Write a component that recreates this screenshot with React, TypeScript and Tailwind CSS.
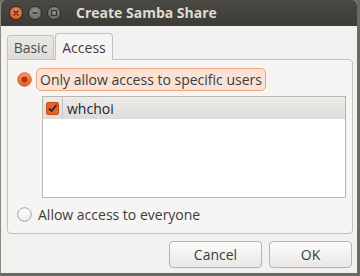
import React from 'react';

const font = { fontFamily: '"Open Sans", "Noto Sans", "DejaVu Sans", sans-serif' };

const TitleButton: React.FC<{ kind: 'close' | 'min' | 'max' }> = ({ kind }) => (
  <div
    className={
      kind === 'close'
        ? 'w-[14px] h-[14px] rounded-full flex items-center justify-center bg-[radial-gradient(circle_at_50%_35%,#f58a60,#dc4f1a)] border border-[#3a2a20]'
        : 'w-[14px] h-[14px] rounded-full flex items-center justify-center bg-[radial-gradient(circle_at_50%_35%,#94928c,#62615c)] border border-[#2e2d2a]'
    }
  >
    <svg width="8" height="8" viewBox="0 0 8 8">
      {kind === 'close' && (
        <path d="M2 2 L6 6 M6 2 L2 6" stroke="#3b1f12" strokeWidth="1.3" strokeLinecap="round" />
      )}
      {kind === 'min' && <path d="M1.5 4 H6.5" stroke="#35342f" strokeWidth="1.3" />}
      {kind === 'max' && <rect x="1.5" y="1.5" width="5" height="5" fill="none" stroke="#35342f" strokeWidth="1.2" />}
    </svg>
  </div>
);

const Radio: React.FC<{ checked?: boolean }> = ({ checked }) => (
  <svg width="15" height="15" viewBox="0 0 15 15">
    <defs>
      <linearGradient id="ro" x1="0" y1="0" x2="0" y2="1">
        <stop offset="0" stopColor="#f59a6c" />
        <stop offset="1" stopColor="#e0602a" />
      </linearGradient>
      <linearGradient id="rw" x1="0" y1="0" x2="0" y2="1">
        <stop offset="0" stopColor="#ffffff" />
        <stop offset="1" stopColor="#ecebe9" />
      </linearGradient>
    </defs>
    {checked ? (
      <>
        <circle cx="7.5" cy="7.5" r="6.8" fill="url(#ro)" stroke="#c9501c" strokeWidth="0.8" />
        <circle cx="7.5" cy="7.5" r="3" fill="#b8330b" />
      </>
    ) : (
      <circle cx="7.5" cy="7.5" r="6.8" fill="url(#rw)" stroke="#9c9a95" strokeWidth="0.9" />
    )}
  </svg>
);

const Check: React.FC = () => (
  <div className="w-[13px] h-[13px] rounded-[2px] bg-[#e6602a] border border-[#c44d18] flex items-center justify-center">
    <svg width="11" height="11" viewBox="0 0 11 11">
      <path d="M2 5.5 L4.5 8 L9.5 2" fill="none" stroke="#2b2622" strokeWidth="1.8" />
    </svg>
  </div>
);

export default function App() {
  return (
    <div className="w-[360px] h-[276px] bg-[#6a6964] flex flex-col" style={font}>
      <div className="w-[357px] h-[273px] flex flex-col bg-[#f2f1f0] border-l border-[#8a8883] rounded-t-[5px] overflow-hidden">
        {/* Title bar */}
        <div className="h-[26px] shrink-0 flex items-center bg-linear-to-b from-[#4a4944] to-[#3c3b37] pl-[8px]">
          <div className="flex items-center gap-[5px]">
            <TitleButton kind="close" />
            <TitleButton kind="min" />
            <TitleButton kind="max" />
          </div>
          <span className="ml-[15px] text-[14px] font-bold text-[#dfdbd2] leading-none">
            Create Samba Share
          </span>
        </div>

        {/* Tabs */}
        <div className="flex items-end pl-[6px] pt-[6px] h-[33px] shrink-0">
          <div className="h-[24px] w-[47px] flex items-center justify-center border border-b-0 border-[#c3c1bc] rounded-t-[4px] bg-linear-to-b from-[#eae8e5] to-[#dedcd8] text-[14px] text-[#4c4c4c]">
            Basic
          </div>
          <div className="relative top-[1px] h-[27px] w-[58px] ml-[1px] flex items-center justify-center border border-b-0 border-[#c3c1bc] rounded-t-[4px] bg-[#f6f5f4] text-[14px] text-[#3c3c3c] z-10">
            Access
          </div>
        </div>

        {/* Frame */}
        <div className="ml-[6px] w-[346px] h-[175px] border border-[#c3c1bc] rounded-b-[4px] rounded-tr-[4px] bg-[#f6f5f4] flex flex-col">
          <div className="flex items-center h-[24px] mt-[7px] pl-[9px]">
            <Radio checked />
            <div className="ml-[4px] h-[23px] px-[3px] flex items-center border border-[#f3a47f] rounded-[5px] bg-[#fbe2d5] text-[14px] text-[#3c3c3c]">
              Only allow access to specific users
            </div>
          </div>

          <div className="ml-[34px] mr-[6px] mt-[5px] h-[102px] border border-[#b9b7b2] bg-white flex flex-col">
            <div className="h-[22px] flex bg-linear-to-b from-[#ecebe9] to-[#dedcd9]">
              <div className="w-[20px] border-r border-[#c9c7c3] flex items-center justify-center">
                <Check />
              </div>
              <div className="flex items-center pl-[4px] text-[14px] text-[#1f1f2e]">whchoi</div>
            </div>
          </div>

          <div className="flex items-center h-[20px] mt-[6px] pl-[9px]">
            <Radio />
            <span className="ml-[6px] text-[14px] text-[#3c3c3c]">Allow access to everyone</span>
          </div>
        </div>

        {/* Buttons */}
        <div className="flex justify-end gap-[7px] mt-[7px] pr-[5px]">
          <button className="w-[93px] h-[27px] rounded-[4px] border border-[#b5b3ae] bg-linear-to-b from-[#fcfcfb] to-[#e9e8e6] text-[14px] text-[#3c3c3c]">
            Cancel
          </button>
          <button className="w-[83px] h-[27px] rounded-[4px] border border-[#b5b3ae] bg-linear-to-b from-[#fcfcfb] to-[#e9e8e6] text-[14px] text-[#3c3c3c]">
            OK
          </button>
        </div>
      </div>
    </div>
  );
}
